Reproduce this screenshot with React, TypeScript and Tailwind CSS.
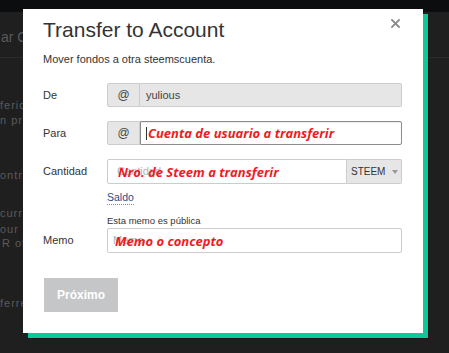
import React from "react"

const red = "font-['Open_Sans',sans-serif] font-bold italic text-[13px] text-[#ed1c24] leading-none"

function Backdrop() {
  return (
    <div className="flex flex-col text-[#5a5a5a] whitespace-nowrap">
      <div className="h-[12px] bg-[#0c0d0f]" />
      <div className="h-[46px] border-b border-[#2b2b2b] pt-[17px] pl-[1px]">
        <div className="w-[22px] overflow-hidden text-[14px] leading-[16px]">ar C</div>
      </div>
      <div className="w-[23px] overflow-hidden flex flex-col text-[11px] tracking-[1px]">
        <div className="mt-[40px] h-[14px] leading-[14px]">ferid</div>
        <div className="mt-[1px] h-[14px] leading-[14px]">n pro</div>
        <div className="mt-[41px] h-[14px] leading-[14px]">ontro</div>
        <div className="mt-[24px] h-[14px] leading-[14px]">curre</div>
        <div className="mt-[3px] h-[13px] leading-[13px]">our de</div>
        <div className="h-[14px] leading-[14px] pl-[2px]">R of</div>
        <div className="mt-[46px] h-[14px] leading-[14px]">ferred</div>
      </div>
    </div>
  )
}

function Row({ label, children, h = "h-[24px]" }: { label: string; children: React.ReactNode; h?: string }) {
  return (
    <div className={`flex items-center ${h}`}>
      <span className="w-[64px] text-[11px] text-[#333]">{label}</span>
      <div className="flex-1 flex h-full">{children}</div>
    </div>
  )
}

function At() {
  return (
    <div className="w-[33px] flex items-center justify-center bg-[#e6e6e6] border border-[#cccccc] rounded-l-[2px] text-[12px] text-[#444]">
      @
    </div>
  )
}

export default function App() {
  return (
    <div className="relative w-[449px] h-[353px] overflow-hidden bg-[#1f1f1f] font-['Liberation_Sans',Arial,sans-serif]">
      <Backdrop />

      <div className="absolute left-[23px] top-[9px] w-[400px] h-[324px] bg-white shadow-[5px_5px_0_0_#0cc99a,6px_6px_0_0_#141414] text-[#333]">
        <button className="absolute left-[368px] top-[10px] w-[9px] h-[9px]">
          <svg width="9" height="9" viewBox="0 0 9 9" className="block">
            <path d="M1 1 L8 8 M8 1 L1 8" stroke="#8a8a8a" strokeWidth="1.8" strokeLinecap="square" />
          </svg>
        </button>

        <div className="flex flex-col pl-[20px] pr-[21px] pt-[9px]">
          <h2 className="text-[21px] leading-[24px] text-[#333]">Transfer to Account</h2>
          <p className="mt-[9px] text-[11px] leading-[16px]">Mover fondos a otra steemscuenta.</p>

          <div className="mt-[16px]">
            <Row label="De">
              <At />
              <div className="flex-1 flex items-center pl-[6px] bg-[#e6e6e6] border border-l-0 border-[#cccccc] rounded-r-[2px] text-[11px] text-[#444]">
                yulious
              </div>
            </Row>
          </div>

          <div className="mt-[14px]">
            <Row label="Para">
              <At />
              <div className="relative flex-1 flex items-center bg-white border border-[#8c8c8c] rounded-r-[2px] shadow-[inset_0_1px_1px_rgba(0,0,0,0.08)]">
                <span className="ml-[5px] w-[1px] h-[13px] bg-[#333]" />
                <span className={`${red} ml-[1px]`}>Cuenta de usuario a transferir</span>
              </div>
            </Row>
          </div>

          <div className="mt-[14px]">
            <Row label="Cantidad" h="h-[25px]">
              <div className="relative flex-1 flex items-center bg-white border border-[#cccccc] rounded-l-[2px]">
                <span className="ml-[9px] text-[11px] text-[#b3b3b3]">Cantidad</span>
                <span className={`${red} absolute left-[10px] top-[6px]`}>Nro. de Steem a transferir</span>
              </div>
              <div className="w-[55px] flex items-center bg-[#e6e6e6] border border-l-0 border-[#cccccc] rounded-r-[2px] pl-[4px] text-[10px] text-[#333]">
                STEEM
                <svg width="6" height="4" viewBox="0 0 6 4" className="ml-[7px]">
                  <path d="M0 0 H6 L3 4 Z" fill="#9a9a9a" />
                </svg>
              </div>
            </Row>
          </div>

          <a className="ml-[64px] mt-[6px] self-start text-[10.5px] leading-[14px] text-[#1a4f99] border-b border-dotted border-[#8a8a8a]">
            Saldo
          </a>

          <p className="ml-[64px] mt-[10px] text-[9.5px] leading-[12px] text-[#333]">Esta memo es pública</p>

          <div className="mt-[1px]">
            <Row label="Memo" h="h-[25px]">
              <div className="relative flex-1 flex items-center bg-white border border-[#cccccc] rounded-[2px]">
                <span className="ml-[5px] text-[11px] text-[#b3b3b3]">Memo</span>
                <span className={`${red} absolute left-[7px] top-[6px]`}>Memo o concepto</span>
              </div>
            </Row>
          </div>

          <button className="mt-[25px] self-start w-[74px] h-[34px] ml-[1px] bg-[#c5c6c8] text-white text-[12px] font-bold">
            Próximo
          </button>
        </div>
      </div>
    </div>
  )
}
